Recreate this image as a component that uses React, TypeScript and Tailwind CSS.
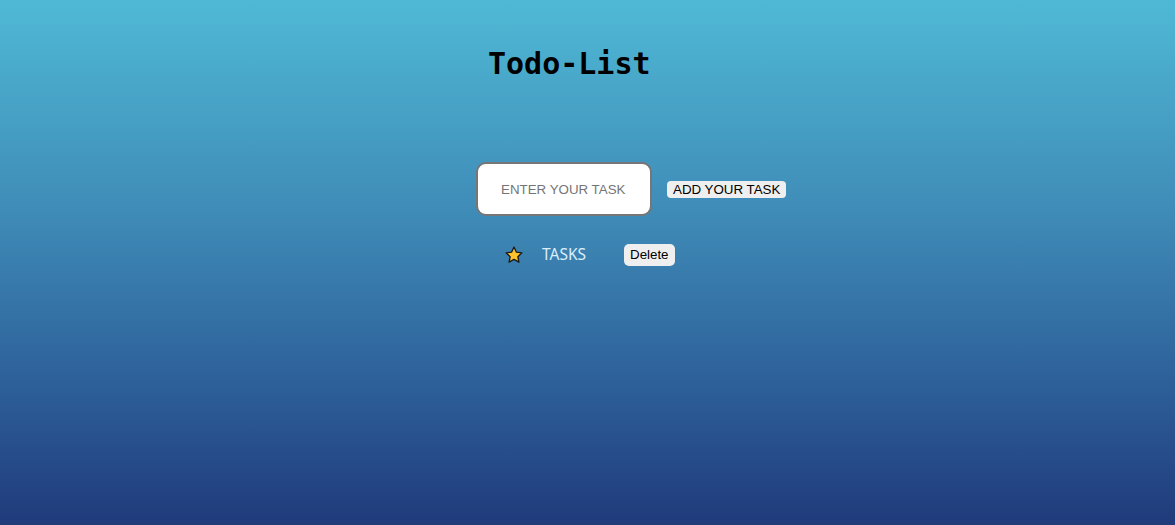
import { useState } from "react";

function Star() {
  return (
    <svg width="20" height="20" viewBox="0 0 24 24" className="shrink-0">
      <path
        d="M12 2.5l2.9 6.1 6.6.8-4.9 4.6 1.3 6.6L12 17.3l-5.9 3.3 1.3-6.6-4.9-4.6 6.6-.8z"
        fill="#fcc32c"
        stroke="#1a1a1a"
        strokeWidth="1.6"
        strokeLinejoin="round"
      />
    </svg>
  );
}

export default function App() {
  const [task, setTask] = useState("");
  const [tasks, setTasks] = useState<string[]>(["TASKS"]);

  const addTask = () => {
    if (!task.trim()) return;
    setTasks([...tasks, task.trim()]);
    setTask("");
  };

  return (
    <div className="min-h-[525px] w-full bg-[linear-gradient(180deg,#4fb9d5_0%,#3f8cb8_40%,#2c5d97_75%,#203a7a_100%)]">
      <div className="flex flex-col pl-[476px] pt-[46px]">
        {/* Title */}
        <h1 className="ml-[12px] font-['DejaVu_Sans_Mono',monospace] text-[30px] font-bold leading-[35px] text-black">
          Todo-List
        </h1>

        {/* Input row */}
        <div className="mt-[81px] flex items-center gap-[15px]">
          <input
            value={task}
            onChange={(e) => setTask(e.target.value)}
            placeholder="ENTER YOUR TASK"
            className="h-[54px] w-[176px] rounded-[10px] border-2 border-[#767676] bg-white px-[23px] font-['Liberation_Sans',Arial,sans-serif] text-[13.33px] text-black outline-none placeholder:text-[#757575]"
          />
          <button
            onClick={addTask}
            className="h-[17px] rounded-[4px] bg-[#efefef] px-[6px] font-['Liberation_Sans',Arial,sans-serif] text-[13.33px] leading-[17px] text-black"
          >
            ADD YOUR TASK
          </button>
        </div>

        {/* Tasks */}
        <ul className="mt-[27px] flex flex-col gap-2">
          {tasks.map((t, i) => (
            <li key={i} className="ml-[28px] flex items-center">
              <Star />
              <span className="ml-[18px] w-[82px] font-['Noto_Sans',sans-serif] text-[15.5px] text-[#dbeefc]">
                {t}
              </span>
              <button
                onClick={() => setTasks(tasks.filter((_, j) => j !== i))}
                className="h-[22px] rounded-[5px] bg-[#efefef] px-[6px] font-['Liberation_Sans',Arial,sans-serif] text-[13.33px] text-black"
              >
                Delete
              </button>
            </li>
          ))}
        </ul>
      </div>
    </div>
  );
}
